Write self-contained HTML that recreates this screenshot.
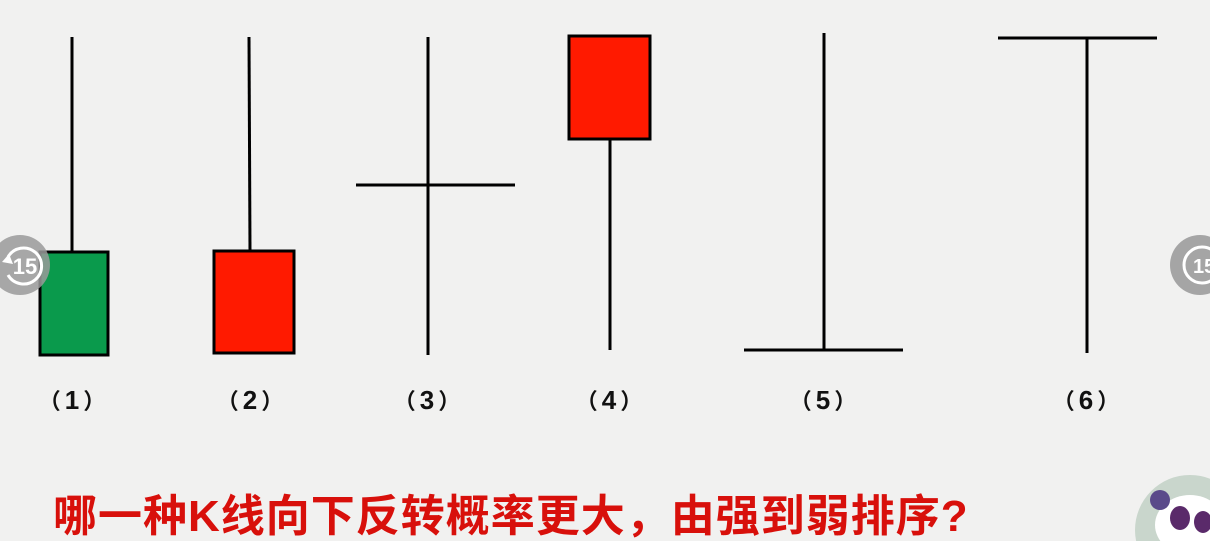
<!DOCTYPE html>
<html><head><meta charset="utf-8"><style>
html,body{margin:0;padding:0;width:1210px;height:541px;overflow:hidden;background:#f1f1f0;position:relative;}
.t{position:absolute;left:53px;top:492px;height:49px;overflow:hidden;font:bold 44px/49px "Liberation Sans","Noto Sans CJK SC",sans-serif;color:#d8100b;white-space:nowrap;letter-spacing:1px;}
.l{position:absolute;top:384px;font:bold 26px/30px "Liberation Sans","Noto Sans CJK SC",sans-serif;color:#111;width:100px;text-align:center;margin-left:-50px;}
.l span{font:bold 22px "Noto Sans CJK SC",sans-serif;}
.l span.a{margin-left:-8px;margin-right:4px}
.l span.b{margin-left:4px;margin-right:-8px}
</style></head><body>
<svg width="1210" height="541" style="position:absolute;left:0;top:0" stroke="#000" stroke-width="3">
<line x1="72" y1="37" x2="72" y2="252"/>
<rect x="40" y="252" width="68" height="103" fill="#0a9a4c"/>
<line x1="249" y1="37" x2="250" y2="251"/>
<rect x="214" y="251" width="80" height="102" fill="#ff1a00"/>
<line x1="428" y1="37" x2="428" y2="355"/>
<line x1="356" y1="185" x2="515" y2="185"/>
<line x1="610" y1="139" x2="610" y2="350"/>
<rect x="569" y="36" width="81" height="103" fill="#ff1a00"/>
<line x1="824" y1="33" x2="824" y2="350"/>
<line x1="744" y1="350" x2="903" y2="350"/>
<line x1="998" y1="38" x2="1157" y2="38"/>
<line x1="1087" y1="38" x2="1087" y2="353"/>
<g stroke="none">
<circle cx="20" cy="265" r="30" fill="#9a9a9a" opacity="0.85"/>
<circle cx="1200" cy="265" r="30" fill="#a5a5a5"/>
</g>
<path d="M8 257 A18 18 0 1 1 8 275" fill="none" stroke="#fff" stroke-width="3"/>
<path d="M2 262 L9 254 L13 264Z" fill="#fff" stroke="none"/>
<circle cx="1202" cy="265" r="18" fill="none" stroke="#fff" stroke-width="3"/>
<text x="25" y="274" font-family="Liberation Sans" font-weight="bold" font-size="22" fill="#fff" stroke="none" text-anchor="middle">15</text>
<text x="1193" y="273" font-family="Liberation Sans" font-weight="bold" font-size="20" fill="#fff" stroke="none">15</text>
<g stroke="none">
<circle cx="1190" cy="530" r="55" fill="#c9d6cc"/>
<ellipse cx="1190" cy="525" rx="35" ry="30" fill="#fff"/>
<ellipse cx="1160" cy="500" rx="10" ry="10" fill="#5a4a8a"/>
<ellipse cx="1180" cy="518" rx="10" ry="12" fill="#5a2a6a"/>
<ellipse cx="1203" cy="522" rx="9" ry="11" fill="#5a2a6a"/>
</g>
</svg>
<div class="l" style="left:72px"><span class="a">（</span>1<span class="b">）</span></div>
<div class="l" style="left:250px"><span class="a">（</span>2<span class="b">）</span></div>
<div class="l" style="left:427px"><span class="a">（</span>3<span class="b">）</span></div>
<div class="l" style="left:609px"><span class="a">（</span>4<span class="b">）</span></div>
<div class="l" style="left:823px"><span class="a">（</span>5<span class="b">）</span></div>
<div class="l" style="left:1086px"><span class="a">（</span>6<span class="b">）</span></div>
<div class="t">哪一种K线向下反转概率更大，由强到弱排序?</div>
</body></html>
